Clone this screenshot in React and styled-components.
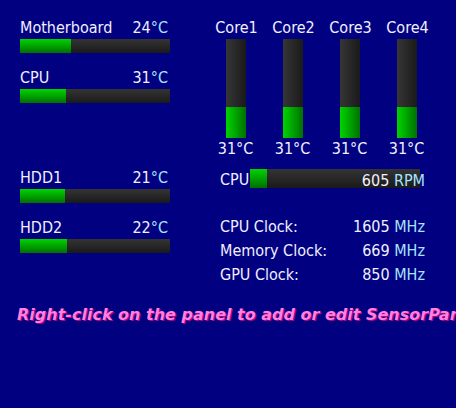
import React from "react";
import styled, { createGlobalStyle } from "styled-components";

const GlobalStyle = createGlobalStyle`
  html, body {
    margin: 0;
    padding: 0;
    background: #000080;
  }
  body {
    font-family: "DejaVu Sans Condensed", "DejaVu Sans", "Liberation Sans", sans-serif;
    color: #f0f0ff;
    font-size: 16px;
  }
`;

const Panel = styled.div`
  width: 456px;
  height: 408px;
  overflow: hidden;
  background: #000080;
  padding-top: 18px;
  box-sizing: border-box;
`;

const Columns = styled.div`
  display: flex;
  align-items: flex-start;
`;

const LeftColumn = styled.div`
  width: 150px;
  margin-left: 20px;
  display: flex;
  flex-direction: column;
`;

const RightColumn = styled.div`
  margin-left: 37px;
  display: flex;
  flex-direction: column;
`;

const Group = styled.div`
  display: flex;
  flex-direction: column;
  gap: 15px;
  margin-bottom: ${(p) => p.$after || 0}px;
`;

const Sensor = styled.div`
  display: flex;
  flex-direction: column;
`;

const LabelRow = styled.div`
  height: 20px;
  line-height: 20px;
  display: flex;
  justify-content: space-between;
  padding-right: 2px;
  margin-bottom: 1px;
  white-space: nowrap;
`;

const Unit = styled.span`
  color: #a8e4ff;
`;

const HBar = styled.div`
  height: 14px;
  width: ${(p) => p.$w || 150}px;
  background: linear-gradient(to bottom, #343434, #1a1a1a);
  display: flex;
`;

const HFill = styled.div`
  height: 100%;
  background: linear-gradient(to bottom, #00d400, #007000);
`;

const Cores = styled.div`
  display: flex;
`;

const Core = styled.div`
  width: 57px;
  display: flex;
  flex-direction: column;
  align-items: center;
`;

const CoreLabel = styled.div`
  height: 20px;
  line-height: 20px;
  margin-bottom: 1px;
  margin-left: 2px;
`;

const VBar = styled.div`
  width: 20px;
  height: 99px;
  background: linear-gradient(to right, #363636, #1a1a1a);
  display: flex;
  flex-direction: column;
  justify-content: flex-end;
`;

const VFill = styled.div`
  width: 100%;
  background: linear-gradient(to right, #00d400, #007000);
`;

const CoreTemp = styled.div`
  height: 20px;
  line-height: 20px;
  margin-top: 1px;
`;

const FanRow = styled.div`
  position: relative;
  margin: 10px 0 0 13px;
  width: 205px;
  height: 19px;
  display: flex;
  align-items: center;
`;

const FanLabel = styled.div`
  width: 30px;
  line-height: 19px;
  padding-top: 2px;
`;

const FanBar = styled(HBar)`
  height: 19px;
`;

const FanValue = styled.div`
  position: absolute;
  right: 0;
  top: 0;
  line-height: 19px;
  padding-top: 2px;
`;

const Clocks = styled.div`
  margin: 27px 0 0 13px;
  width: 205px;
  display: flex;
  flex-direction: column;
`;

const ClockRow = styled.div`
  height: 24px;
  line-height: 24px;
  display: flex;
  justify-content: space-between;
  white-space: nowrap;
`;

const Hint = styled.div`
  margin: 18px 0 0 17px;
  font-family: "DejaVu Sans", Verdana, sans-serif;
  font-weight: bold;
  font-style: italic;
  font-size: 16px;
  line-height: 20px;
  white-space: nowrap;
  color: #ff80e0;
  text-shadow: 1px 1px 0 #b8007a;
`;

const leftGroups = [
  [
    { name: "Motherboard", value: 24, pct: 34 },
    { name: "CPU", value: 31, pct: 30.5 },
  ],
  [
    { name: "HDD1", value: 21, pct: 30 },
    { name: "HDD2", value: 22, pct: 31.5 },
  ],
];

const cores = ["Core1", "Core2", "Core3", "Core4"];

const clocks = [
  { name: "CPU Clock:", value: 1605 },
  { name: "Memory Clock:", value: 669 },
  { name: "GPU Clock:", value: 850 },
];

function App() {
  return (
    <>
      <GlobalStyle />
      <Panel>
        <Columns>
          <LeftColumn>
            {leftGroups.map((group, i) => (
              <Group key={i} $after={i === 0 ? 65 : 0}>
                {group.map((s) => (
                  <Sensor key={s.name}>
                    <LabelRow>
                      <span>{s.name}</span>
                      <span>
                        {s.value}
                        <Unit>°C</Unit>
                      </span>
                    </LabelRow>
                    <HBar>
                      <HFill style={{ width: `${s.pct}%` }} />
                    </HBar>
                  </Sensor>
                ))}
              </Group>
            ))}
          </LeftColumn>
          <RightColumn>
            <Cores>
              {cores.map((c) => (
                <Core key={c}>
                  <CoreLabel>{c}</CoreLabel>
                  <VBar>
                    <VFill style={{ height: "31%" }} />
                  </VBar>
                  <CoreTemp>31°C</CoreTemp>
                </Core>
              ))}
            </Cores>
            <FanRow>
              <FanLabel>CPU</FanLabel>
              <FanBar $w={170}>
                <HFill style={{ width: "10%" }} />
              </FanBar>
              <FanValue>
                605 <Unit>RPM</Unit>
              </FanValue>
            </FanRow>
            <Clocks>
              {clocks.map((c) => (
                <ClockRow key={c.name}>
                  <span>{c.name}</span>
                  <span>
                    {c.value} <Unit>MHz</Unit>
                  </span>
                </ClockRow>
              ))}
            </Clocks>
          </RightColumn>
        </Columns>
        <Hint>Right-click on the panel to add or edit SensorPanel</Hint>
      </Panel>
    </>
  );
}

export default App;
